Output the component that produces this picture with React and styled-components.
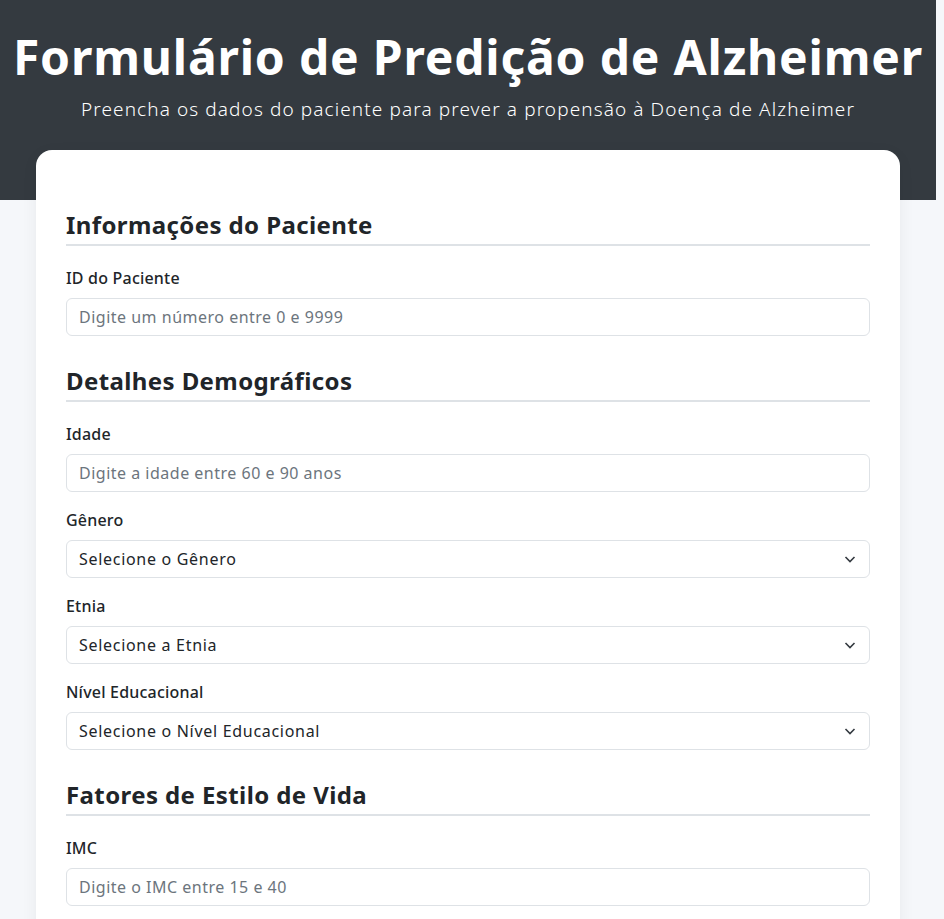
import React from 'react'
import styled, { createGlobalStyle } from 'styled-components'

const GlobalStyle = createGlobalStyle`
  * { box-sizing: border-box; }
  body {
    margin: 0;
    background: #f5f7fa;
    font-family: "Noto Sans", "Open Sans", sans-serif;
    color: #212529;
  }
`

// the original page was laid out with a scrollbar gutter on the right
const Page = styled.div`
  width: calc(100% - 8px);
`

const Header = styled.header`
  height: 200px;
  background: #343a40;
  color: #fff;
  text-align: center;
  padding-top: 24px;
`

const Title = styled.h1`
  margin: 0;
  font-size: 48px;
  line-height: 66px;
  font-weight: 700;
  letter-spacing: 0.8px;
`

const Subtitle = styled.p`
  margin: 6px 0 0;
  font-size: 19px;
  line-height: 26px;
  font-weight: 300;
  letter-spacing: 1.1px;
`

const Card = styled.main`
  width: 864px;
  margin: -50px auto 0;
  background: #fff;
  border-radius: 16px;
  box-shadow: 0 4px 16px rgba(0, 0, 0, 0.06);
  padding: 60px 30px 30px;
`

const Section = styled.section`
  & + & {
    margin-top: 30px;
  }
`

const SectionTitle = styled.h2`
  margin: 0 0 20px;
  padding-bottom: 5px;
  border-bottom: 2px solid #dee2e6;
  font-size: 24px;
  line-height: 29px;
  font-weight: 700;
  letter-spacing: 0.4px;
  color: #212529;
`

const Group = styled.div`
  margin-bottom: 16px;
`

const Label = styled.label`
  display: block;
  font-size: 16px;
  line-height: 24px;
  font-weight: 500;
  letter-spacing: 0.2px;
  margin-bottom: 8px;
`

const fieldCss = `
  display: block;
  width: 100%;
  height: 38px;
  border: 1px solid #dee2e6;
  border-radius: 6px;
  background: #fff;
  padding: 0 12px;
  font-family: inherit;
  font-size: 16px;
  letter-spacing: 0.5px;
  color: #212529;
  outline: none;
`

const Input = styled.input`
  ${fieldCss}
  &::placeholder {
    color: #6c757d;
  }
`

const SelectWrap = styled.div`
  position: relative;
`

const Select = styled.select`
  ${fieldCss}
  letter-spacing: 0.7px;
  appearance: none;
  -webkit-appearance: none;
`

const Chevron = styled.svg`
  position: absolute;
  right: 14px;
  top: 13px;
  pointer-events: none;
`

const TextField = ({ label, placeholder }) => (
  <Group>
    <Label>{label}</Label>
    <Input type="text" placeholder={placeholder} />
  </Group>
)

const SelectField = ({ label, placeholder }) => (
  <Group>
    <Label>{label}</Label>
    <SelectWrap>
      <Select defaultValue="">
        <option value="">{placeholder}</option>
      </Select>
      <Chevron width="12" height="12" viewBox="0 0 12 12">
        <path d="M1.5 4 L6 8.5 L10.5 4" fill="none" stroke="#343a40" strokeWidth="1.6" />
      </Chevron>
    </SelectWrap>
  </Group>
)

export default function App() {
  return (
    <Page>
      <GlobalStyle />
      <Header>
        <Title>Formulário de Predição de Alzheimer</Title>
        <Subtitle>Preencha os dados do paciente para prever a propensão à Doença de Alzheimer</Subtitle>
      </Header>
      <Card>
        <Section>
          <SectionTitle>Informações do Paciente</SectionTitle>
          <TextField label="ID do Paciente" placeholder="Digite um número entre 0 e 9999" />
        </Section>
        <Section>
          <SectionTitle>Detalhes Demográficos</SectionTitle>
          <TextField label="Idade" placeholder="Digite a idade entre 60 e 90 anos" />
          <SelectField label="Gênero" placeholder="Selecione o Gênero" />
          <SelectField label="Etnia" placeholder="Selecione a Etnia" />
          <SelectField label="Nível Educacional" placeholder="Selecione o Nível Educacional" />
        </Section>
        <Section>
          <SectionTitle>Fatores de Estilo de Vida</SectionTitle>
          <TextField label="IMC" placeholder="Digite o IMC entre 15 e 40" />
        </Section>
      </Card>
    </Page>
  )
}
